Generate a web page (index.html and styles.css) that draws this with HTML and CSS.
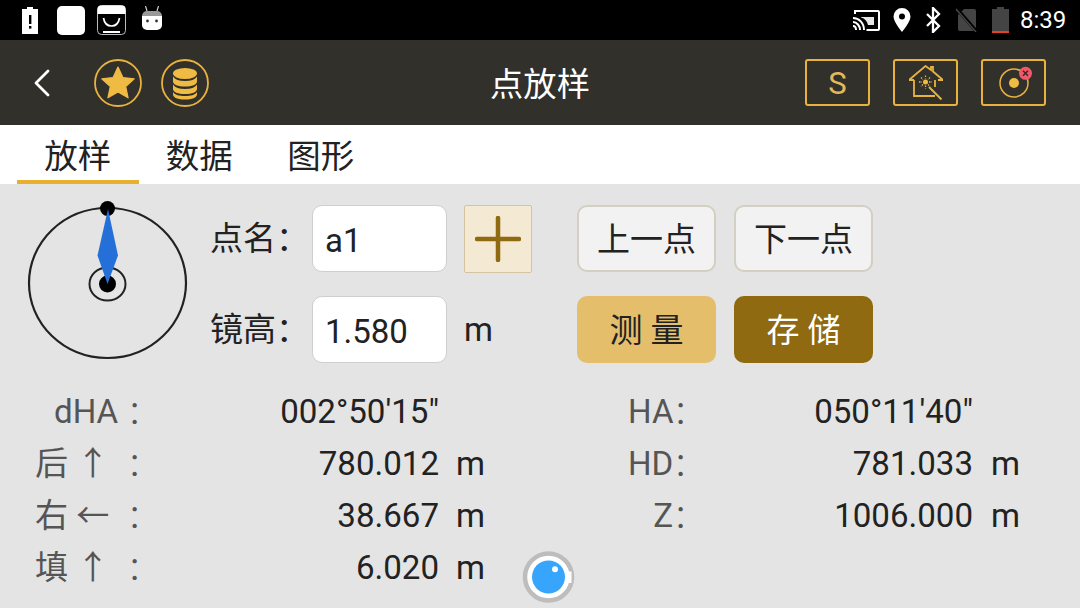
FILE: index.html
```html
<!DOCTYPE html>
<html lang="zh">
<head>
<meta charset="utf-8">
<title>点放样</title>
<link rel="stylesheet" href="styles.css">
</head>
<body>
<div class="screen">
  <div class="status">
    <div class="status-left">
      <svg class="s-batt" width="16" height="28" viewBox="0 0 16 28"><path fill="#fff" d="M5 1h6v2h5v25H0V3h5z"/><rect x="7" y="9" width="2.4" height="9" fill="#000"/><rect x="7" y="20" width="2.4" height="2.6" fill="#000"/></svg>
      <div class="s-square"></div>
      <svg class="s-bag" width="29" height="30" viewBox="0 0 29 30"><rect x=".5" y=".5" width="28" height="29" rx="4" fill="#000" stroke="#bbb"/><path d="M.5 9V4.500a4 4 0 0 1 4-4h20a4 4 0 0 1 4 4V9z" fill="#fff"/><path d="M6.500 13c1 6 4 8 8 8s7-2 8-8" fill="none" stroke="#fff" stroke-width="1.700"/><path d="M6 27h17" stroke="#fff" stroke-width="2"/></svg>
      <svg class="s-droid" width="20" height="24" viewBox="0 0 20 24"><path d="M5 5 3.500 0M15 5l1.500-5" stroke="#ccc" stroke-width="1.200"/><path d="M0 10a5 5 0 0 1 5-5h10a5 5 0 0 1 5 5v1H0z" fill="#999"/><path d="M0 10h20v9a5 5 0 0 1-5 5H5a5 5 0 0 1-5-5z" fill="#fff"/><circle cx="5.500" cy="15" r="1.400" fill="#333"/><circle cx="14.500" cy="15" r="1.400" fill="#333"/></svg>
    </div>
    <div class="status-right">
      <svg width="28" height="22" viewBox="0 0 28 22"><path d="M3 5V2h23a1 1 0 0 1 1 1v17a1 1 0 0 1-1 1H14.500" fill="none" stroke="#fff" stroke-width="2"/><path d="M9 8h13v8h-6C15 12 13 9.500 9 8.500z" fill="#fff" opacity=".9"/><path d="M1 9c6 0 11 5 11 12M1 13c4 0 7 4 7 8M1 17c2 0 3 2 3 4" fill="none" stroke="#fff" stroke-width="2"/></svg>
      <svg class="s-pin" width="18" height="24" viewBox="0 0 18 24"><path fill="#fff" fill-rule="evenodd" d="M9 0a8.500 8.500 0 0 1 8.500 8.500C17.500 14 9 24 9 24S.5 14 .5 8.500A8.500 8.500 0 0 1 9 0zm0 5.500a3 3 0 1 0 0 6 3 3 0 0 0 0-6z"/></svg>
      <svg class="s-bt" width="16" height="26" viewBox="0 0 16 26"><path d="M2 7l12 12-6 6V1l6 6L2 19" fill="none" stroke="#fff" stroke-width="2.300"/></svg>
      <svg class="s-sim" width="22" height="24" viewBox="0 0 22 24"><path fill="#444" d="M8 1h10a2 2 0 0 1 2 2v18a2 2 0 0 1-2 2H4a2 2 0 0 1-2-2V7z"/><path d="M1 1l20 23" stroke="#000" stroke-width="3.500"/><path d="M0 1l20 23" stroke="#444" stroke-width="1.500"/></svg>
      <svg class="s-batt2" width="17" height="26" viewBox="0 0 17 26"><path fill="#444" d="M5 0h7v2h5v22H0V2h5z"/><rect y="24" width="17" height="2.500" fill="#e8411f"/></svg>
      <span class="clock">8:39</span>
    </div>
  </div>

  <header class="bar">
    <div class="bar-left">
      <svg class="back" width="20" height="30" viewBox="0 0 20 30"><path d="M16 3 4 15l12 12" fill="none" stroke="#fff" stroke-width="2.800" stroke-linecap="round" stroke-linejoin="round"/></svg>
      <svg width="48" height="48" viewBox="0 0 48 48"><circle cx="24" cy="24" r="23" fill="none" stroke="#e8b23f" stroke-width="1.800"/><path fill="#f0bb43" stroke="#f0bb43" stroke-width="1.200" stroke-linejoin="round" d="M24 8l4.900 10.500 11.300 1.300-8.500 7.700 2.400 11.300L24 33 13.900 38.800l2.400-11.300-8.500-7.700 11.300-1.300z"/></svg>
      <svg class="db" width="48" height="48" viewBox="0 0 48 48"><circle cx="24" cy="24" r="23" fill="none" stroke="#e8b23f" stroke-width="1.800"/><ellipse cx="24" cy="14.500" rx="12" ry="5.500" fill="#f0bb43"/><path fill="#f0bb43" d="M12 17.500c2 3 6 4.500 12 4.500s10-1.500 12-4.500v5c0 3-5 5-12 5s-12-2-12-5zM12 25.500c2 3 6 4.500 12 4.500s10-1.500 12-4.500v4.500c0 3-5 5-12 5s-12-2-12-5zM12 33c2 3 6 4 12 4s10-1 12-4v2.500c0 3-5 5-12 5s-12-2-12-5z"/></svg>
    </div>
    <h1 class="title">点放样</h1>
    <div class="bar-right">
      <div class="tool tool-s">S</div>
      <div class="tool">
        <svg width="34" height="36" viewBox="0 0 34 36"><path d="M0 15h5M5 15v16h21M26 15v7M29 15h5L24 6.500V2h-2v3L16.500 1 0 15" fill="none" stroke="#e8b23f" stroke-width="1.800"/><path d="M20 22l12.500 12.500" stroke="#e8b23f" stroke-width="2"/><circle cx="16.500" cy="17" r="2.500" fill="#f0bb43"/><g stroke="#e8b23f" stroke-width="1.300" stroke-dasharray="1.500 1"><path d="M16.500 10.500v3M16.500 20.500v3M10 17h3M20 17h3M12 12.500l2 2M19 19.500l2 2M21 12.500l-2 2M14 19.500l-2 2"/></g></svg>
      </div>
      <div class="tool">
        <svg width="36" height="36" viewBox="0 0 36 36"><circle cx="18" cy="18" r="14" fill="none" stroke="#e8b23f" stroke-width="1.500"/><circle cx="18" cy="18" r="5" fill="#f0bb43"/><circle cx="29.500" cy="8.300" r="6.500" fill="#ee5a68"/><path d="M27 5.800l5 5m0-5-5 5" stroke="#4a2020" stroke-width="1.500"/></svg>
      </div>
    </div>
  </header>

  <nav class="tabs">
    <div class="tab tab-on">放样</div>
    <div class="tab">数据</div>
    <div class="tab">图形</div>
  </nav>

  <main class="body">
    <section class="top">
      <svg class="compass" width="164" height="166" viewBox="0 0 164 166">
        <ellipse cx="81.500" cy="83" rx="78.500" ry="75" fill="none" stroke="#222" stroke-width="2.200"/>
        <ellipse cx="81.500" cy="84" rx="18" ry="16.500" fill="none" stroke="#222" stroke-width="2"/>
        <circle cx="81.500" cy="8.500" r="7.500" fill="#000"/>
        <circle cx="81.500" cy="84" r="8.500" fill="#000"/>
        <path d="M82 9 92 55.500 81.500 84 71.500 55.500z" fill="#2470d8"/>
      </svg>
      <div class="form">
        <div class="form-row">
          <label class="lbl">点名：</label>
          <div class="field">a1</div>
          <div class="plus"><svg width="46" height="46" viewBox="0 0 46 46"><path d="M23 2v42M2 23h42" stroke="#8f6a10" stroke-width="4.500" stroke-linecap="round"/></svg></div>
          <button class="btn btn-light">上一点</button>
          <button class="btn btn-light">下一点</button>
        </div>
        <div class="form-row">
          <label class="lbl">镜高：</label>
          <div class="field">1.580</div>
          <div class="unit-box">m</div>
          <button class="btn btn-gold">测 量</button>
          <button class="btn btn-brown">存 储</button>
        </div>
      </div>
    </section>
    <section class="data">
      <div class="col col-left">
        <span class="k k-d">dHA<i class="colon">:</i></span><span class="v">002°50'15"</span><span class="u"></span>
        <span class="k">后 ↑<i class="colon">:</i></span><span class="v">780.012</span><span class="u">m</span>
        <span class="k">右 ←<i class="colon">:</i></span><span class="v">38.667</span><span class="u">m</span>
        <span class="k">填 ↑<i class="colon">:</i></span><span class="v">6.020</span><span class="u">m</span>
      </div>
      <div class="col col-right">
        <span class="k2">HA<i class="colon colon-r">:</i></span><span class="v">050°11'40"</span><span class="u"></span>
        <span class="k2">HD<i class="colon colon-r">:</i></span><span class="v">781.033</span><span class="u">m</span>
        <span class="k2">Z<i class="colon colon-r">:</i></span><span class="v">1006.000</span><span class="u">m</span>
      </div>
    </section>
    <svg class="spinner" width="53" height="52" viewBox="0 0 53 52"><circle cx="26.500" cy="26" r="23.500" fill="#fff" stroke="#bdbdbd" stroke-width="4.500"/><circle cx="26.500" cy="26" r="16.500" fill="#36a5fb"/><rect x="43" y="20.500" width="6.500" height="11.500" fill="#fff"/><circle cx="33" cy="18.300" r="3" fill="#fff"/></svg>
  </main>
</div>
</body>
</html>
```
FILE: styles.css
```css
* { box-sizing: border-box; }
html, body { margin: 0; padding: 0; }
body { background: #e4e4e4; font-family: Roboto, "Noto Sans CJK SC", sans-serif; }
.screen { position: relative; width: 1080px; height: 608px; overflow: hidden; display: flex; flex-direction: column; background: #e4e4e4; }

.status { height: 40px; flex: none; background: #000; display: flex; justify-content: space-between; align-items: center; padding: 0 15px 0 22px; }
.status-left, .status-right { display: flex; align-items: center; }
.s-square { width: 28px; height: 29px; background: #fff; border-radius: 5px; margin-left: 19px; }
.s-bag { margin-left: 12px; }
.s-droid { margin-left: 16px; margin-top: -5px; }
.status-right svg { display: block; }
.s-pin { margin-left: 13px; }
.s-bt { margin-left: 14px; }
.s-sim { margin-left: 15px; }
.s-batt2 { margin-left: 14px; }
.clock { margin-left: 11px; color: #fff; font-size: 24px; line-height: 28px; width: 45px; }

.bar { height: 85px; flex: none; background: #31302b; display: grid; grid-template-columns: 1fr auto 1fr; align-items: center; }
.bar-left { display: flex; align-items: center; padding-left: 32px; }
.back { margin-right: 42px; }
.db { margin-left: 20px; margin-right: 0; transform: translateX(-1px); }
.title { margin: 4px 0 0; font-size: 33.300px; font-weight: 400; color: #fff; line-height: 44px; }
.bar-right { display: flex; justify-content: flex-end; gap: 23px; padding-right: 34px; }
.tool { width: 65px; height: 47px; border: 2px solid #e8b23f; border-radius: 3px; display: flex; align-items: center; justify-content: center; }
.tool-s { color: #e3b95e; font-size: 31px; padding-top: 2px; }

.tabs { height: 59px; flex: none; background: #fff; display: flex; padding-left: 17px; }
.tab { width: 121.500px; height: 59px; text-align: center; font-size: 33.500px; line-height: 63px; color: #222; }
.tab-on { border-bottom: 4px solid #e8b02f; }

.body { flex: 1; display: flex; flex-direction: column; }
.top { display: flex; padding: 16px 0 0 26px; height: 202px; flex: none; }
.compass { flex: none; }
.form { margin-left: 20px; padding-top: 5px; display: flex; flex-direction: column; gap: 24px; }
.form-row { display: flex; align-items: center; height: 67px; }
.lbl { width: 102px; font-size: 33px; color: #222; line-height: 46px; }
.field { width: 135px; height: 67px; background: #fff; border: 1px solid #cfcfcf; border-radius: 10px; font-size: 33px; line-height: 70px; padding-left: 12px; color: #222; }
.plus { width: 68px; height: 68px; margin-left: 17px; background: #f4e9d2; border: 1px solid #d4c3a1; border-radius: 2px; display: flex; align-items: center; justify-content: center; margin-right: 45px; }
.unit-box { width: 68px; margin-left: 17px; margin-right: 45px; font-size: 33px; line-height: 46px; color: #222; }
.btn { width: 139px; height: 67px; border-radius: 10px; font-family: inherit; font-size: 33px; padding: 0 0 3px; border: 2px solid transparent; }
.btn + .btn { margin-left: 18px; }
.btn-light { background: #f2f2f2; border-color: #d3cfc3; color: #222; }
.btn-gold { background: #e5be6c; border-color: #e5be6c; color: #222; }
.btn-brown { background: #8f6a10; border-color: #8f6a10; color: #fff; }

.data { display: flex; padding-left: 35px; }
.col { display: grid; grid-auto-rows: 52px; align-items: center; }
.col-left { grid-template-columns: 106px 298px 64px; width: 468px; }
.col-right { grid-template-columns: 60px 285px 46px; margin-left: 125px; }
.k, .k2 { color: #555; font-size: 33.100px; line-height: 52px; white-space: nowrap; position: relative; }
.k2 { text-align: right; padding-right: 15px; }
.k-d { padding-left: 19px; }
.colon { font-style: normal; font-size: 38px; position: absolute; left: 95px; top: -1px; }
.colon-r { left: 48px; }
.v { text-align: right; font-size: 33.100px; color: #222; line-height: 52px; }
.u { padding-left: 17px; font-size: 33.100px; color: #222; line-height: 52px; }
.col-right .u { padding-left: 18px; }
.spinner { position: absolute; left: 522px; top: 551px; }
```
